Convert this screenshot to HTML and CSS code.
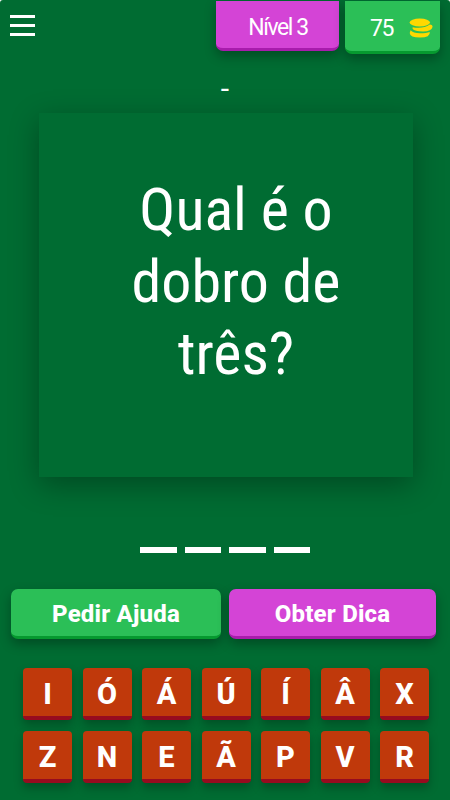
FILE: index.html
```html
<!DOCTYPE html>
<html lang="pt">
<head>
  <meta charset="UTF-8" />
  <meta name="viewport" content="width=device-width, initial-scale=1.0"/>
  <title>Quiz</title>
  <link rel="stylesheet" href="styles.css">
</head>
<body>
  <header class="topbar">
    <button class="menu" aria-label="Menu">
      <span></span>
      <span></span>
      <span></span>
    </button>
    <div class="level">Nível 3</div>
    <div class="coins">
      <span>75</span>
      <svg class="coin-icon" width="24" height="20" viewBox="0 0 24 20">
        <ellipse cx="10.8" cy="4.5" rx="10.2" ry="4"/>
        <path d="M3.6 9.3 Q14 11.2 20.8 6.6 Q23.8 6.8 23.5 9 Q22.5 13.4 14 13.5 Q5.5 13.5 3.6 10.8 Z"/>
        <path d="M1.6 12.2 Q4 15.2 11 15.3 Q17.5 15.3 20.8 14 Q21.5 19.6 11 19.6 Q1 19.6 .7 15 Z"/>
      </svg>
    </div>
  </header>

  <div class="category">-</div>

  <main class="card">
    <h1>Qual é o<br>dobro de<br>três?</h1>
  </main>

  <div class="answer">
    <span></span>
    <span></span>
    <span></span>
    <span></span>
  </div>

  <div class="actions">
    <button class="help">Pedir Ajuda</button>
    <button class="hint">Obter Dica</button>
  </div>

  <div class="keys">
    <button>I</button>
    <button>Ó</button>
    <button>Á</button>
    <button>Ú</button>
    <button>Í</button>
    <button>Â</button>
    <button>X</button>
    <button>Z</button>
    <button>N</button>
    <button>E</button>
    <button>Ã</button>
    <button>P</button>
    <button>V</button>
    <button>R</button>
  </div>
</body>
</html>
```

FILE: styles.css
```css
* {
  box-sizing: border-box;
}
html {
  background-color: white;
}
body {
  margin: 0;
  height: 800px;
  overflow: hidden;
  border-radius: 3px 3px 0 0;
  background-color: #006c32;
  color: white;
  font-family: Roboto, sans-serif;
}
button {
  border: none;
  padding: 0;
  color: white;
  font-family: inherit;
  font-weight: bold;
  cursor: pointer;
}
.topbar {
  display: flex;
  align-items: flex-start;
  height: 54px;
  padding: 1px 10px 0;
}
.menu {
  display: flex;
  flex-direction: column;
  gap: 6px;
  width: 25px;
  margin: 14px auto 0 0;
  background: none;
}
.menu span {
  height: 3px;
  background-color: white;
}
.level, .coins {
  display: flex;
  align-items: center;
  font-size: 23px;
  letter-spacing: -1.4px;
}
.level {
  justify-content: center;
  width: 123px;
  height: 50px;
  margin-right: 6px;
  border-bottom: 3px solid #a81cac;
  border-radius: 0 0 7px 7px;
  background-color: #d444d6;
  box-shadow: 0 5px 12px rgba(0, 0, 0, 0.3);
  padding: 5px 0 0 1px;
}
.coins {
  justify-content: space-between;
  width: 95px;
  height: 53px;
  padding: 4px 7px 0 25px;
  border-bottom: 3px solid #06992f;
  border-radius: 0 0 7px 7px;
  background-color: #2bbf57;
  box-shadow: 0 5px 12px rgba(0, 0, 0, 0.3);
}
.coin-icon {
  fill: #ffd800;
}
.category {
  height: 59px;
  padding-top: 20px;
  font-size: 30px;
  line-height: 30px;
  text-align: center;
}
.card {
  width: 374px;
  height: 364px;
  margin-left: 39px;
  padding: 61px 0 0 20px;
  box-shadow: 0 8px 28px rgba(0, 0, 0, 0.32);
}
h1 {
  margin: 0;
  font-family: "Roboto Condensed", Roboto, sans-serif;
  font-stretch: condensed;
  font-size: 60px;
  font-weight: normal;
  line-height: 72px;
  text-align: center;
}
.answer {
  display: flex;
  justify-content: center;
  gap: 8px;
  margin-top: 70px;
}
.answer span {
  width: 36.5px;
  height: 6px;
  background-color: white;
}
.actions {
  display: flex;
  gap: 8px;
  margin: 36px 14px 0 11px;
}
.actions button {
  height: 50px;
  padding-top: 3px;
  border-radius: 7px;
  font-size: 24px;
  font-weight: 800;
  letter-spacing: 0.2px;
  box-shadow: 0 5px 12px rgba(0, 0, 0, 0.3);
}
.actions .help {
  width: 210px;
  border-bottom: 3px solid #06992f;
  background-color: #2bbf57;
}
.actions .hint {
  width: 207px;
  border-bottom: 3px solid #a81cac;
  background-color: #d444d6;
}
.keys {
  display: grid;
  grid-template-columns: repeat(7, 49px);
  column-gap: 10.5px;
  row-gap: 11px;
  margin: 29px 0 0 23px;
}
.keys button {
  height: 52px;
  padding-top: 3px;
  border-bottom: 4px solid #970b1f;
  border-radius: 4px;
  background-color: #c0390b;
  font-size: 29px;
  font-weight: 800;
  box-shadow: 0 5px 10px rgba(0, 0, 0, 0.25);
}
```
